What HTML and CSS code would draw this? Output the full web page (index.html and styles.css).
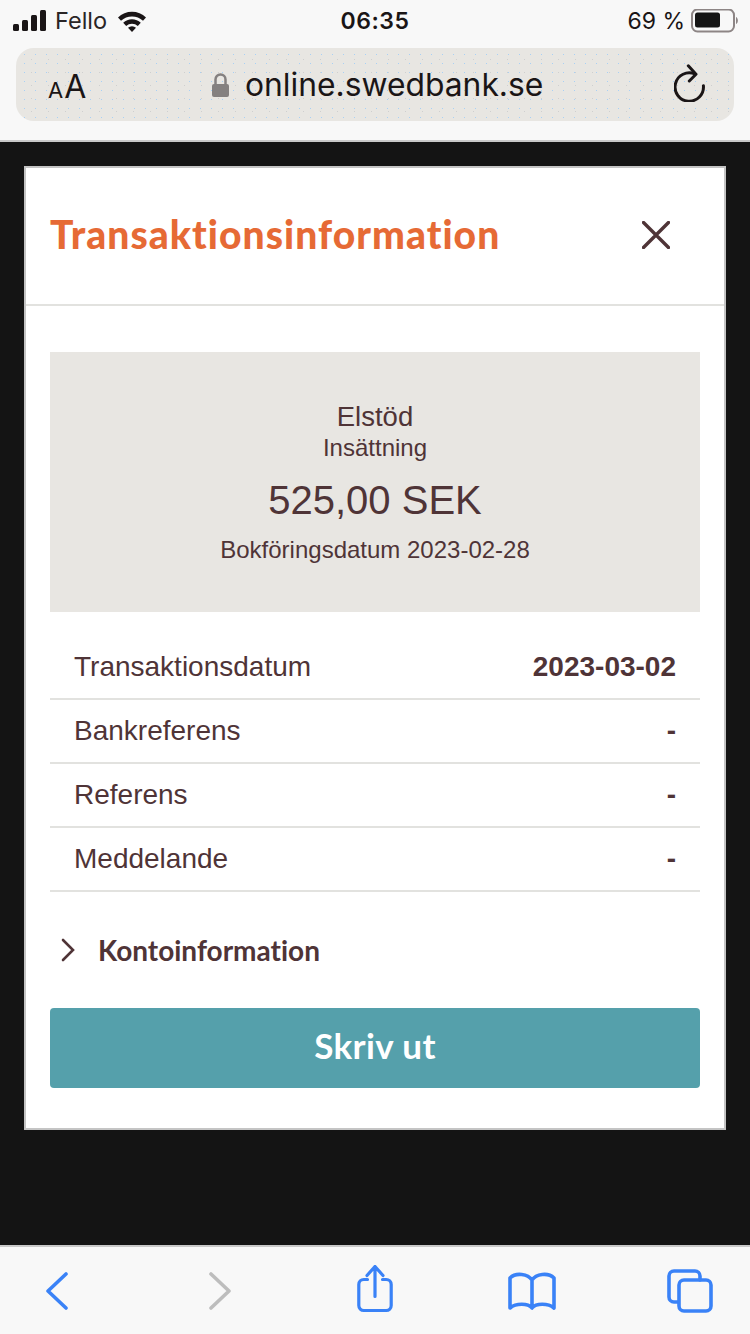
FILE: index.html
```html
<!doctype html>
<html lang="sv">
<head>
<meta charset="utf-8" />
<title>Transaktionsinformation</title>
<link rel="stylesheet" href="styles.css">
</head>
<body>
<div class="phone">
  <header class="chrome">
    <div class="status">
      <div class="status-side">
        <svg class="signal" width="34" height="22" viewBox="0 0 34 22" aria-hidden="true">
          <rect x="0" y="14" width="6" height="7" rx="1.5" />
          <rect x="9" y="10" width="6" height="11" rx="1.5" />
          <rect x="18" y="5" width="6" height="16" rx="1.5" />
          <rect x="27" y="0" width="6" height="21" rx="1.5" />
        </svg>
        <span class="carrier">Fello</span>
        <svg class="wifi" width="30" height="22" viewBox="0 0 30 22" aria-hidden="true">
          <path d="M1 7.5 A20 20 0 0 1 29 7.5 L26 10.8 A16 16 0 0 0 4 10.8 Z" />
          <path d="M6.2 12.8 A12.5 12.5 0 0 1 23.8 12.8 L20.8 16 A8.5 8.5 0 0 0 9.2 16 Z" />
          <path d="M11 17.8 A6 6 0 0 1 19 17.8 L15 22 Z" />
        </svg>
      </div>
      <div class="clock">06:35</div>
      <div class="status-side status-right">
        <span class="percent">69 %</span>
        <svg class="battery" width="48" height="24" viewBox="0 0 48 24" aria-hidden="true">
          <rect class="battery-shell" x="1" y="0.5" width="42" height="22" rx="5.5" />
          <rect x="4" y="3.5" width="25" height="15" rx="2.5" />
          <path class="battery-tip" d="M45 8 C47.5 9 47.5 14 45 15 Z" />
        </svg>
      </div>
    </div>
    <div class="urlbar">
      <div class="aa"><span class="aa-small">A</span><span>A</span></div>
      <div class="address">
        <svg width="17" height="24" viewBox="0 0 17 24" aria-hidden="true">
          <path class="lock-bow" d="M3.5 12 V6.5 A5 5 0 0 1 13.5 6.5 V12" />
          <rect class="lock-body" x="0" y="11" width="17" height="13" rx="2" />
        </svg>
        <span>online.swedbank.se</span>
      </div>
      <svg class="reload" width="32" height="38" viewBox="0 0 32 38" aria-hidden="true">
        <path d="M21 10 A14.2 14.2 0 1 0 29.4 21.7" />
        <path d="M14.3 1.8 L22 10.3 L15.3 17" />
      </svg>
    </div>
  </header>

  <main class="backdrop">
    <section class="modal">
      <div class="modal-head">
        <h1>Transaktionsinformation</h1>
        <svg class="close" width="28" height="28" viewBox="0 0 28 28" aria-hidden="true">
          <path d="M1.5 1.5 L26.5 26.5 M26.5 1.5 L1.5 26.5" />
        </svg>
      </div>
      <div class="modal-body">
        <div class="summary">
          <div class="summary-name">Elstöd</div>
          <div class="summary-type">Insättning</div>
          <div class="summary-amount">525,00 SEK</div>
          <div class="summary-date">Bokföringsdatum 2023-02-28</div>
        </div>
        <dl class="details">
          <div class="row"><dt>Transaktionsdatum</dt><dd>2023-03-02</dd></div>
          <div class="row"><dt>Bankreferens</dt><dd>-</dd></div>
          <div class="row"><dt>Referens</dt><dd>-</dd></div>
          <div class="row"><dt>Meddelande</dt><dd>-</dd></div>
        </dl>
        <div class="expander">
          <svg width="16" height="24" viewBox="0 0 16 24" aria-hidden="true">
            <path d="M3 2 L13 12 L3 22" />
          </svg>
          <span>Kontoinformation</span>
        </div>
        <button class="print" type="button">Skriv ut</button>
      </div>
    </section>
  </main>

  <nav class="toolbar">
    <svg width="24" height="38" viewBox="0 0 24 38" aria-hidden="true"><path d="M21 2 L3 19 L21 36" /></svg>
    <svg class="off" width="24" height="38" viewBox="0 0 24 38" aria-hidden="true"><path d="M3 2 L21 19 L3 36" /></svg>
    <svg class="share" width="40" height="48" viewBox="0 0 40 48" aria-hidden="true">
      <path d="M12.5 14.5 H8.8 A5 5 0 0 0 3.8 19.5 V40.5 A5 5 0 0 0 8.8 45.5 H31.2 A5 5 0 0 0 36.2 40.5 V19.5 A5 5 0 0 0 31.2 14.5 H27.5" />
      <path d="M20 31.5 V1.5 M12 10.5 L20 1.5 L28 10.5" />
    </svg>
    <svg width="48" height="38" viewBox="0 0 48 38" aria-hidden="true">
      <path d="M24 8 C20 2 8 0 2 6 V36 C8 31 20 31 24 36 C28 31 40 31 46 36 V6 C40 0 28 2 24 8 Z M24 8 V36" />
    </svg>
    <svg width="46" height="44" viewBox="0 0 46 44" aria-hidden="true">
      <path d="M11 33 H7 A5 5 0 0 1 2 28 V7 A5 5 0 0 1 7 2 H28 A5 5 0 0 1 33 7 V11" />
      <rect x="12" y="11" width="32" height="31" rx="5" />
    </svg>
  </nav>
</div>
</body>
</html>
```

FILE: styles.css
```css
:root{
  --ink:#4f3437;
  --line:#e2e2df;
  --sand:#e8e6e2;
  --blue:#3a82f7;
}
*{box-sizing:border-box;margin:0;padding:0}
body{background:#141414;font-family:"Liberation Sans",Arial,sans-serif;color:var(--ink)}
.phone{width:750px;height:1334px;display:flex;flex-direction:column;overflow:hidden}

/* browser chrome */
.chrome{height:142px;background:#f8f8f8;border-bottom:2px solid #c9c9c9;padding:0 16px;font-family:Inter,"Noto Sans",sans-serif;color:#1a1516}
.status{height:48px;display:flex;align-items:center;justify-content:space-between;padding-bottom:7px;position:relative}
.status-side{display:flex;align-items:center}
.signal{fill:#1a1516;margin-left:-3px}
.carrier{font-size:23.5px;margin-left:8px;color:#2a2526}
.wifi{fill:#1a1516;margin-left:10px}
.clock{font-size:23px;font-weight:600;position:absolute;left:0;right:0;text-align:center;letter-spacing:.5px}
.percent{font-size:23px;margin-right:6px}
.status-right{margin-right:-5px}
.battery{fill:#141414}
.battery-shell{fill:none;stroke:#8d8585;stroke-width:2}
.battery-tip{fill:#8d8585}
.urlbar{
  height:73px;border-radius:18px;display:flex;align-items:center;padding:0 28px 0 32px;
  background-color:var(--sand);
  background-image:
    radial-gradient(circle,#a8d0f5 .6px,transparent 1px),
    radial-gradient(circle,#cfcfcf .4px,transparent .9px);
  background-size:11px 9px,17px 13px;
  background-position:3px 2px,7px 5px;
}
.aa{font-size:32px;line-height:1;display:flex;align-items:baseline;gap:1px;width:164px;padding-top:5px}
.aa-small{font-size:22px}
.address{display:flex;align-items:center;gap:16px;font-size:31.8px;flex:1}
.lock-body{fill:#848080}
.lock-bow{fill:none;stroke:#848080;stroke-width:2.5}
.reload{fill:none;stroke:#1a1516;stroke-width:3;stroke-linecap:round;stroke-linejoin:round;margin-top:-3px}

/* modal */
.backdrop{flex:1;padding:24px 24px 0;background:#141414}
.modal{background:#fff;border:2px solid #c4c4c4;height:964px}
.modal-head{height:138px;display:flex;align-items:center;justify-content:space-between;padding:0 54px 4px 24px;border-bottom:2px solid var(--line)}
.modal-head h1{font-family:Lato,sans-serif;font-weight:900;font-size:39px;letter-spacing:1.04px;color:#e66a35;white-space:nowrap;font-variant-ligatures:none}
.close{fill:none;stroke:var(--ink);stroke-width:3.4;stroke-linecap:round;margin-top:2px}
.modal-body{padding:46px 24px 0}
.summary{height:260px;background:var(--sand);display:flex;flex-direction:column;align-items:center;padding-top:50px}
.summary-name{font-size:27.5px;line-height:30px}
.summary-type{font-size:24px;line-height:30px;margin-top:1px}
.summary-amount{font-size:40px;line-height:44px;margin-top:15px}
.summary-date{font-size:24px;line-height:28px;margin-top:14px}
.details{margin-top:24px}
.row{height:64px;display:flex;align-items:center;justify-content:space-between;padding:0 24px;border-bottom:2px solid var(--line);font-size:28px}
.row dd{font-weight:700}
.expander{height:116px;display:flex;align-items:center;padding-left:10px;gap:22px;font-family:Lato,sans-serif;font-weight:700;font-size:28px;font-variant-ligatures:none}
.expander svg{fill:none;stroke:var(--ink);stroke-width:2.6;stroke-linecap:round}
.print{display:block;width:100%;height:80px;padding-bottom:6px;background:#55a0ab;border:0;border-radius:4px;color:#fff;font-family:Lato,sans-serif;font-weight:700;font-size:35px;letter-spacing:.4px}

/* bottom bar */
.toolbar{height:89px;background:#f8f8f8;border-top:2px solid #c9c9c9;display:grid;grid-template-columns:114px 212px 98px 216px 100px;align-items:center;justify-items:center}
.toolbar svg{fill:none;stroke:var(--blue);stroke-width:3.6;stroke-linecap:round;stroke-linejoin:round}
.toolbar svg.off{stroke:#bdbdbd}
.toolbar svg.share{stroke-width:3.2;margin-bottom:4px}
```
